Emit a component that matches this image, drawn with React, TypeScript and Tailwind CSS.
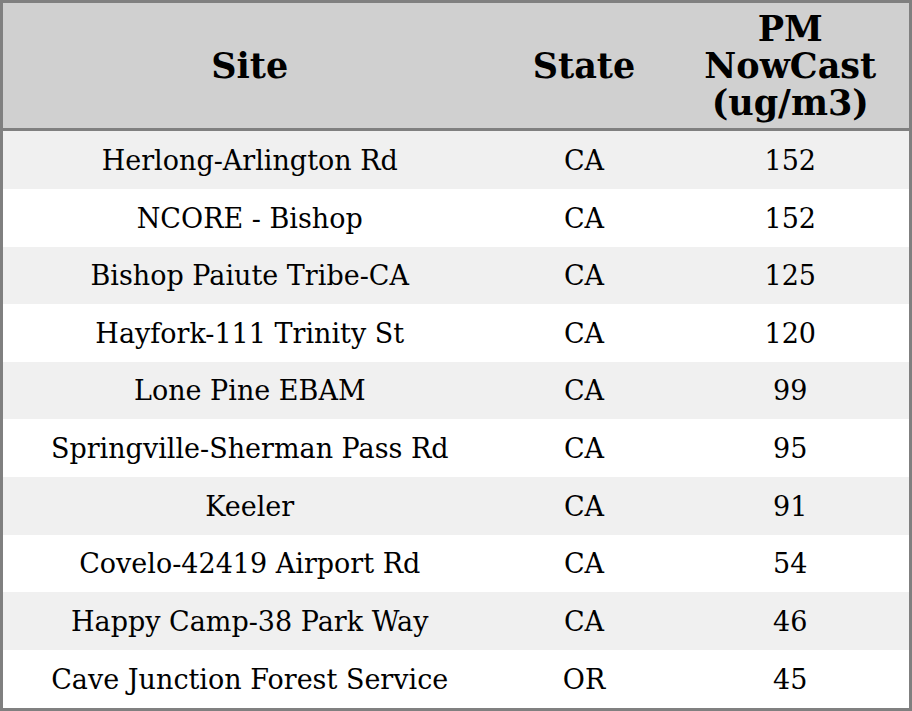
const rows: [string, string, number][] = [
  ['Herlong-Arlington Rd', 'CA', 152],
  ['NCORE - Bishop', 'CA', 152],
  ['Bishop Paiute Tribe-CA', 'CA', 125],
  ['Hayfork-111 Trinity St', 'CA', 120],
  ['Lone Pine EBAM', 'CA', 99],
  ['Springville-Sherman Pass Rd', 'CA', 95],
  ['Keeler', 'CA', 91],
  ['Covelo-42419 Airport Rd', 'CA', 54],
  ['Happy Camp-38 Park Way', 'CA', 46],
  ['Cave Junction Forest Service', 'OR', 45],
];

export default function App() {
  return (
    <div className="w-[912px] h-[711px] bg-white font-['DejaVu_Serif',serif] text-black">
      <table className="w-full h-full border-[3px] border-[#808080] border-collapse table-fixed">
        <colgroup>
          <col className="w-[495px]" />
          <col className="w-[175px]" />
          <col />
        </colgroup>
        <thead>
          <tr className="bg-[#d0d0d0] h-[128px] border-b-[3px] border-[#808080]">
            <th className="text-[35px] leading-[37px] font-bold text-center">Site</th>
            <th className="text-[35px] leading-[37px] font-bold text-center">State</th>
            <th className="text-[35px] leading-[37px] font-bold text-center">
              PM
              <br />
              NowCast
              <br />
              (ug/m3)
            </th>
          </tr>
        </thead>
        <tbody>
          {rows.map(([site, state, value], i) => (
            <tr key={site} className={i % 2 === 0 ? 'bg-[#f0f0f0]' : 'bg-white'}>
              <td className="text-[27px] text-center pt-[2px]">{site}</td>
              <td className="text-[27px] text-center pt-[2px]">{state}</td>
              <td className="text-[27px] text-center pt-[2px]">{value}</td>
            </tr>
          ))}
        </tbody>
      </table>
    </div>
  );
}
